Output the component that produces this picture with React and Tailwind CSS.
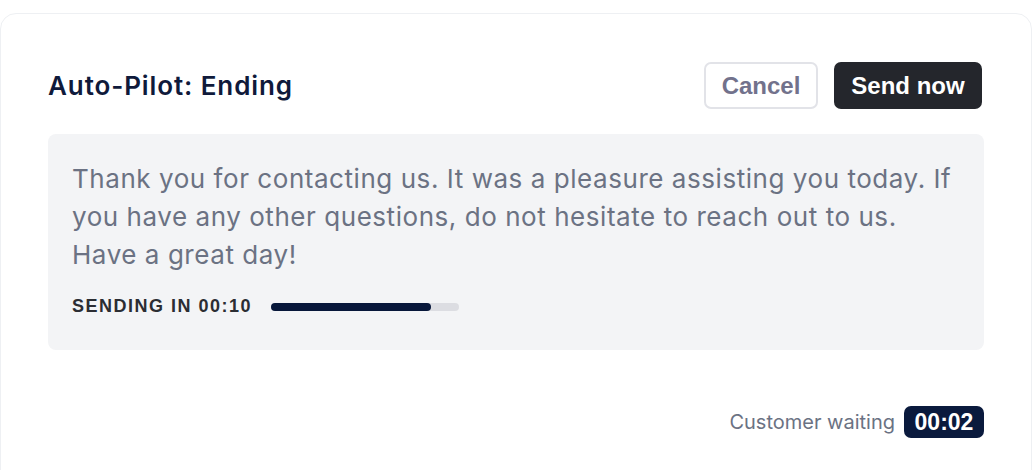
export default function App() {
  return (
    <div className="w-[1032px] h-[470px] bg-white overflow-hidden pt-[13px]">
      <div className="h-[480px] rounded-t-[16px] border border-[#eef0f3] bg-white px-[47px] pt-[48px]">
        <div className="flex items-center justify-between">
          <h1 className="text-[26px] font-semibold text-[#0f1a3b] font-['Inter',sans-serif] tracking-[0.9px]">
            Auto-Pilot: Ending
          </h1>
          <div className="mr-[2px] flex items-center gap-4">
            <button className="h-[47px] w-[114px] rounded-[7px] border-2 border-[#e2e3e8] text-[24px] font-bold text-[#72728c] font-['Liberation_Sans',Arial,sans-serif]">
              Cancel
            </button>
            <button className="h-[47px] w-[148px] rounded-[7px] bg-[#24262c] text-[24px] font-bold text-white font-['Liberation_Sans',Arial,sans-serif]">
              Send now
            </button>
          </div>
        </div>
        <div className="mt-[25px] rounded-[8px] bg-[#f3f4f6] px-6 pt-[26px] pb-[33px]">
          <p className="text-[26px] leading-[38px] tracking-[0.55px] text-[#6b7283] font-['Inter',sans-serif]">
            Thank you for contacting us. It was a pleasure assisting you today. If you have any other questions, do not hesitate to reach out to us. Have a great day!
          </p>
          <div className="mt-[22px] flex items-center gap-[19px]">
            <span className="text-[18px] leading-[21px] font-bold tracking-[1.5px] text-[#2b2d33] font-['Liberation_Sans',Arial,sans-serif]">
              SENDING IN 00:10
            </span>
            <div className="h-[8px] w-[188px] rounded-full bg-[#dcdde2]">
              <div className="h-full rounded-full bg-[#07173a]" style={{ width: "85%" }} />
            </div>
          </div>
        </div>
        <div className="mt-[56px] flex items-center justify-end gap-[9px]">
          <span className="text-[20px] text-[#6b7283] font-['Inter',sans-serif]">Customer waiting</span>
          <span className="h-[32px] w-[80px] flex items-center justify-center rounded-[7px] bg-[#0a1a3d] text-[23px] font-bold text-white font-['Liberation_Sans',Arial,sans-serif]">
            00:02
          </span>
        </div>
      </div>
    </div>
  );
}
